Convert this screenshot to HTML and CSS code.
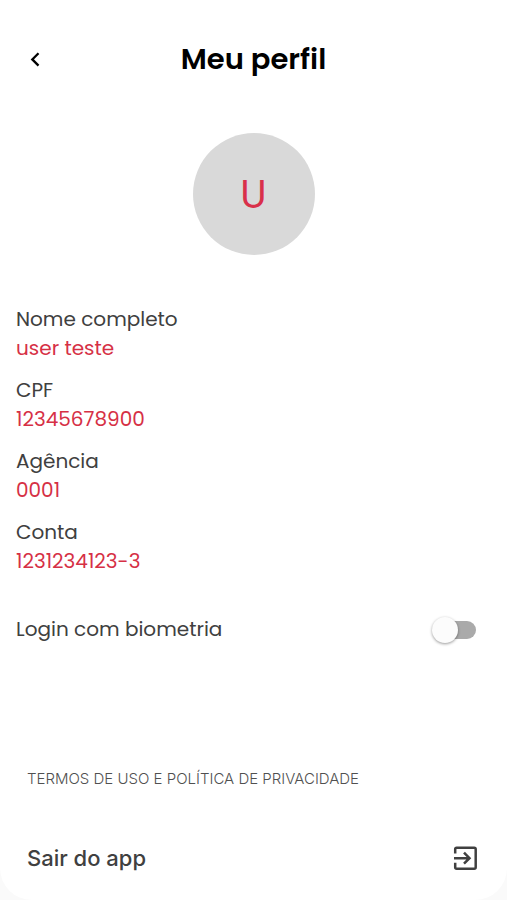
FILE: index.html
```
<!DOCTYPE html>
<html lang="pt-BR">
<head>
<meta charset="utf-8">
<meta name="viewport" content="width=device-width, initial-scale=1">
<title>Meu perfil</title>
<link rel="stylesheet" href="styles.css">
</head>
<body>
<main class="screen">
  <header class="header">
    <button class="back" type="button" aria-label="Voltar">
      <svg width="14" height="18" viewBox="0 0 14 18" fill="none" stroke="currentColor" stroke-width="2.3"><path d="M9.500 3.200 3.300 9.400l6.200 6.200"/></svg>
    </button>
    <h1 class="title">Meu perfil</h1>
  </header>
  <div class="avatar">U</div>
  <dl class="details">
    <div><dt>Nome completo</dt><dd>user teste</dd></div>
    <div><dt>CPF</dt><dd>12345678900</dd></div>
    <div><dt>Agência</dt><dd>0001</dd></div>
    <div><dt>Conta</dt><dd>1231234123-3</dd></div>
  </dl>
  <div class="setting">
    <label for="biometria">Login com biometria</label>
    <input class="switch" id="biometria" type="checkbox" role="switch">
  </div>
  <footer class="footer">
    <a class="terms" href="#termos">TERMOS DE USO E POLÍTICA DE PRIVACIDADE</a>
    <button class="logout" type="button">
      <span>Sair do app</span>
      <svg width="26" height="26" viewBox="0 0 26 26" fill="none" stroke="currentColor" stroke-width="2.5"><path d="M3.200 7.500V3.200q0-1.500 1.500-1.500h17.500q1.500 0 1.500 1.500v18q0 1.500-1.500 1.500h-17.500q-1.500 0-1.500-1.500v-4.500M2 12.200h15M12 6.700l5.500 5.500-5.500 5.500"/></svg>
    </button>
  </footer>
</main>
</body>
</html>
```
FILE: styles.css
```
* {
  box-sizing: border-box;
}

body {
  margin: 0;
  background: #fafafa;
  color: #404040;
  font-family: Poppins, Inter, sans-serif;
  font-size: 20px;
  line-height: 29px;
}

button {
  padding: 0;
  border: 0;
  background: none;
  color: inherit;
  font: inherit;
  cursor: pointer;
}

svg {
  display: block;
}

.screen {
  display: flex;
  flex-direction: column;
  min-height: 100vh;
  padding: 39px 16px 27px;
  border-radius: 0 0 32px 32px;
  background: #fff;
}

.header {
  display: grid;
  grid-template-columns: 40px 1fr 40px;
  align-items: center;
  color: #000;
}

.back {
  justify-self: center;
}

.title {
  margin: 0;
  font-size: 29px;
  font-weight: 600;
  line-height: 40px;
  text-align: center;
}

.avatar {
  display: grid;
  place-items: center;
  align-self: center;
  width: 122px;
  height: 122px;
  margin-top: 54px;
  border-radius: 50%;
  background: #d9d9d9;
  color: #d9304a;
  font-size: 39px;
}

.details {
  display: grid;
  gap: 13px;
  margin: 50px 0 0;
}

.details dd {
  margin: 0;
  color: #d63045;
}

.setting {
  display: flex;
  align-items: center;
  justify-content: space-between;
  margin-top: 39px;
  padding-right: 15px;
}

.switch {
  display: flex;
  align-items: center;
  appearance: none;
  width: 40px;
  height: 18px;
  margin: 0;
  border-radius: 9px;
  background: #aaa;
  cursor: pointer;
}

.switch::before {
  content: "";
  flex: none;
  width: 26px;
  height: 26px;
  margin-left: -4px;
  border-radius: 50%;
  background: #fcfcfc;
  box-shadow: 0 1px 3px rgb(0 0 0 / 40%);
}

.switch:checked {
  justify-content: flex-end;
  background: #d63448;
}

.footer {
  display: grid;
  gap: 51px;
  margin-top: auto;
  padding: 0 13px 0 11px;
}

.terms {
  color: #505050;
  font-family: Inter, sans-serif;
  font-size: 15px;
  font-weight: 300;
  text-decoration: none;
}

.logout {
  display: flex;
  align-items: center;
  justify-content: space-between;
  font-family: Inter, sans-serif;
  font-size: 22px;
  font-weight: 500;
}
```
